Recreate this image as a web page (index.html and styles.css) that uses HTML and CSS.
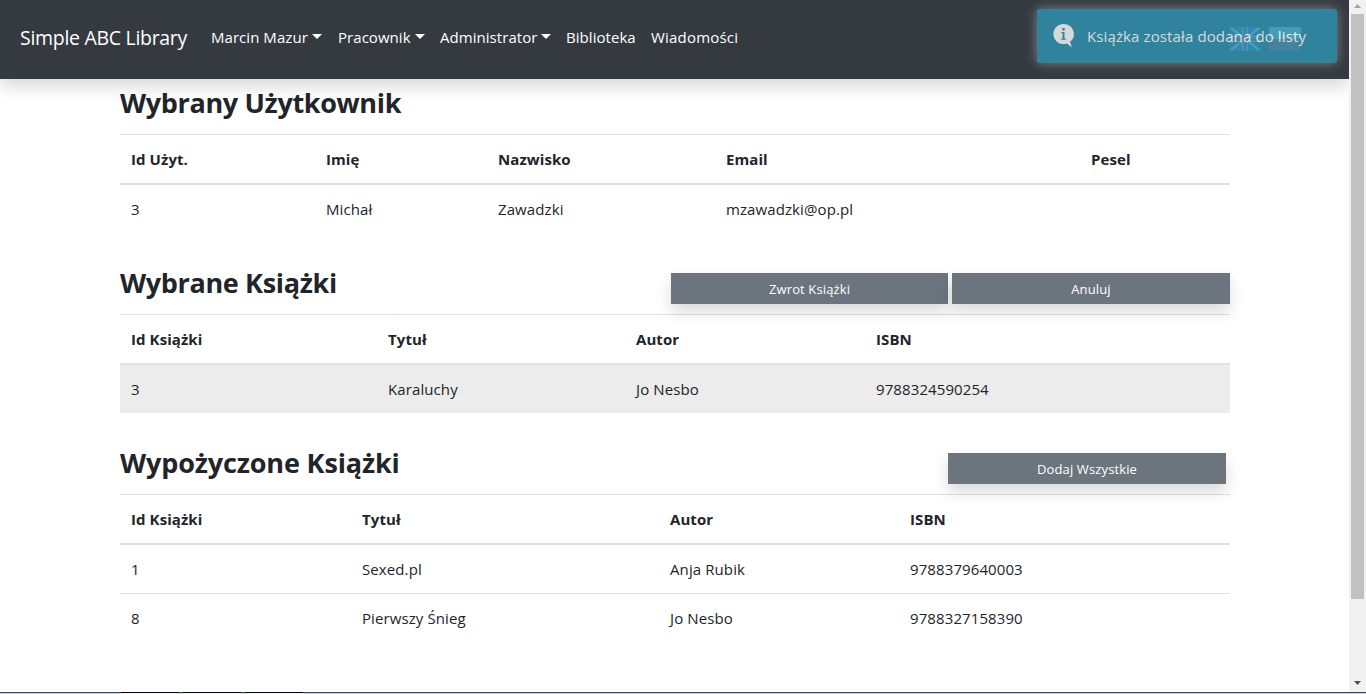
FILE: index.html
```html
<!DOCTYPE html>
<html lang="pl">
<head>
<meta charset="utf-8">
<title>Simple ABC Library</title>
<link rel="stylesheet" href="styles.css">
</head>
<body>
<div class="window">
  <div class="page">
    <nav class="navbar">
      <a class="brand">Simple ABC Library</a>
      <ul class="menu">
        <li class="item user caret">Marcin Mazur</li>
        <li class="item staff caret">Pracownik</li>
        <li class="item admin caret">Administrator</li>
        <li class="item library">Biblioteka</li>
        <li class="item messages">Wiadomości</li>
      </ul>
      <div class="flags">
        <svg class="flag" width="32" height="24" viewBox="0 0 32 24">
          <rect width="32" height="24" rx="2" fill="#3a4a70"/>
          <path d="M6 0h7v7zM19 0h7l-7 7zM0 5v4h7zM32 5v4h-7zM0 15v4l7-4zM32 15v4l-7-4zM6 24h7v-7zM19 24h7l-7-7z" fill="#2060c8"/>
          <path d="M2 1l28 22M30 1L2 23" stroke="#a8c0d0" stroke-width="2.5"/>
          <path d="M0 12h32M16 0v24" stroke="#a8c0d0" stroke-width="6"/>
          <path d="M0 12h32M16 0v24" stroke="#a03850" stroke-width="3.5"/>
        </svg>
        <svg class="flag" width="32" height="24" viewBox="0 0 32 24">
          <rect width="32" height="24" rx="2" fill="#9c3848"/>
          <path d="M2 0h28a2 2 0 0 1 2 2v10H0V2a2 2 0 0 1 2-2z" fill="#a5b5bd"/>
        </svg>
      </div>
      <div class="toast">
        <svg class="info" width="22" height="26" viewBox="0 0 22 26">
          <path d="M10.5 1a10 10 0 1 0 3.3 19.4l5.2 3.8-2-5.4A10 10 0 0 0 10.5 1z" fill="#fff"/>
          <path d="M9.3 5h2.4v2.4H9.3zM8.2 9h3.3v6.7H13v1H8v-1h1.5V10H8.2z" fill="#2f96b4"/>
        </svg>
        <span class="message">Książka została dodana do listy</span>
      </div>
    </nav>
    <main class="container">
      <section class="panel">
        <header class="head"><h2 class="title">Wybrany Użytkownik</h2></header>
        <table class="table users">
          <colgroup><col><col><col><col><col></colgroup>
          <thead><tr><th>Id Użyt.</th><th>Imię</th><th>Nazwisko</th><th>Email</th><th>Pesel</th></tr></thead>
          <tbody><tr><td>3</td><td>Michał</td><td>Zawadzki</td><td>mzawadzki@op.pl</td><td></td></tr></tbody>
        </table>
      </section>
      <section class="panel">
        <header class="head"><h2 class="title">Wybrane Książki</h2>
          <div class="actions"><button class="btn return">Zwrot Książki</button><button class="btn">Anuluj</button></div>
        </header>
        <table class="table selected">
          <colgroup><col><col><col><col></colgroup>
          <thead><tr><th>Id Książki</th><th>Tytuł</th><th>Autor</th><th>ISBN</th></tr></thead>
          <tbody><tr class="active"><td>3</td><td>Karaluchy</td><td>Jo Nesbo</td><td>9788324590254</td></tr></tbody>
        </table>
      </section>
      <section class="panel">
        <header class="head"><h2 class="title wide">Wypożyczone Książki</h2>
          <div class="actions single"><button class="btn">Dodaj Wszystkie</button></div>
        </header>
        <table class="table borrowed">
          <colgroup><col><col><col><col></colgroup>
          <thead><tr><th>Id Książki</th><th>Tytuł</th><th>Autor</th><th>ISBN</th></tr></thead>
          <tbody><tr><td>1</td><td>Sexed.pl</td><td>Anja Rubik</td><td>9788379640003</td></tr>
          <tr><td>8</td><td>Pierwszy Śnieg</td><td>Jo Nesbo</td><td>9788327158390</td></tr></tbody>
        </table>
      </section>
    </main>
  </div>
  <aside class="scrollbar">
    <svg width="17" height="14" viewBox="0 0 17 14"><path d="M5 8h7L8.5 4z" fill="#a3a3a3"/></svg>
    <div class="thumb"></div>
    <svg class="down" width="17" height="17" viewBox="0 0 17 17"><path d="M5 6h7l-3.5 4z" fill="#505050"/></svg>
  </aside>
</div>
<footer class="taskbar"><i class="tab"></i><i class="tab"></i><i class="tab"></i></footer>
</body>
</html>
```
FILE: styles.css
```css
* { box-sizing: border-box; }
body {
  margin: 0;
  height: 694px;
  overflow: hidden;
  font-family: "Open Sans", "Noto Sans", sans-serif;
  font-size: 15px;
  line-height: 24px;
  color: #212529;
  background: #fff;
}
.window { display: flex; height: 692px; }
.page { width: 1349px; overflow: hidden; }
.navbar {
  position: relative;
  display: flex;
  align-items: center;
  height: 79px;
  padding: 0 48px 4px 20px;
  background: #343a40;
  box-shadow: 0 8px 16px rgba(0, 0, 0, .15);
  color: #fff;
}
.brand { width: 191px; font-size: 19.5px; letter-spacing: -.3px; white-space: nowrap; }
.menu { display: flex; margin: 0; padding: 0 0 2px; list-style: none; }
.item { display: flex; align-items: center; white-space: nowrap; letter-spacing: .05px; }
.user { width: 127px; }
.staff { width: 102px; }
.admin { width: 126px; }
.library { width: 85px; }
.messages { letter-spacing: .2px; }
.caret::after {
  content: "";
  margin-left: 4px;
  border: 5px solid transparent;
  border-top-color: #fff;
  border-bottom: 0;
}
.flags { display: flex; gap: 8px; margin-left: auto; padding-top: 2px; }
.toast {
  position: absolute;
  top: 9px;
  left: 1037px;
  display: flex;
  align-items: center;
  width: 300px;
  height: 54px;
  padding-left: 16px;
  border-radius: 3px;
  background: #2f96b4;
  box-shadow: 0 0 12px #999;
  opacity: .8;
}
.message { margin-left: 12px; white-space: nowrap; letter-spacing: .12px; }
.container { width: 1110px; margin-left: 120px; }
.panel { height: 180px; }
.head { display: flex; justify-content: space-between; height: 55px; padding-top: 7px; }
.title { margin: 0; font-size: 27px; line-height: 34px; font-weight: 700; letter-spacing: -.34px; white-space: nowrap; }
.wide { letter-spacing: -.14px; }
.actions { display: flex; gap: 4px; padding-top: 7px; }
.single { padding-right: 4px; }
.btn {
  width: 278px;
  height: 31px;
  padding: 1px 0 0;
  border: 0;
  background: #6c757d;
  color: #fff;
  font: 13px "Open Sans", "Noto Sans", sans-serif;
  letter-spacing: .12px;
  box-shadow: 0 8px 16px rgba(0, 0, 0, .15);
}
.return { width: 277px; }
.table { width: 100%; border-collapse: separate; border-spacing: 0; table-layout: fixed; }
.table th, .table td { padding: 0 0 0 11px; text-align: left; white-space: nowrap; border-top: 1px solid #dee2e6; }
.table th { height: 51px; border-bottom: 2px solid #dee2e6; letter-spacing: .08px; }
.table td { height: 49px; letter-spacing: .1px; }
.table tbody tr:first-child td { height: 48px; border-top: 0; }
.active { background: #ececec; }
.users col:nth-child(1) { width: 195px; }
.users col:nth-child(2) { width: 172px; }
.users col:nth-child(3) { width: 228px; }
.users col:nth-child(4) { width: 365px; }
.selected col:nth-child(1) { width: 257px; }
.selected col:nth-child(2) { width: 248px; }
.selected col:nth-child(3) { width: 240px; }
.borrowed col:nth-child(1) { width: 231px; }
.borrowed col:nth-child(2) { width: 308px; }
.borrowed col:nth-child(3) { width: 240px; }
.scrollbar { display: flex; flex-direction: column; align-items: center; width: 17px; background: #f1f1f1; }
.thumb { width: 13px; height: 585px; background: #c1c1c1; }
.down { margin-top: auto; }
.taskbar {
  display: flex;
  gap: 4px;
  height: 2px;
  padding-left: 121px;
  background: linear-gradient(#3d4a5c 50%, #c3d0e0 50%);
}
.tab { width: 58px; background: linear-gradient(#05070b 50%, #eef1f8 50%); }
```
